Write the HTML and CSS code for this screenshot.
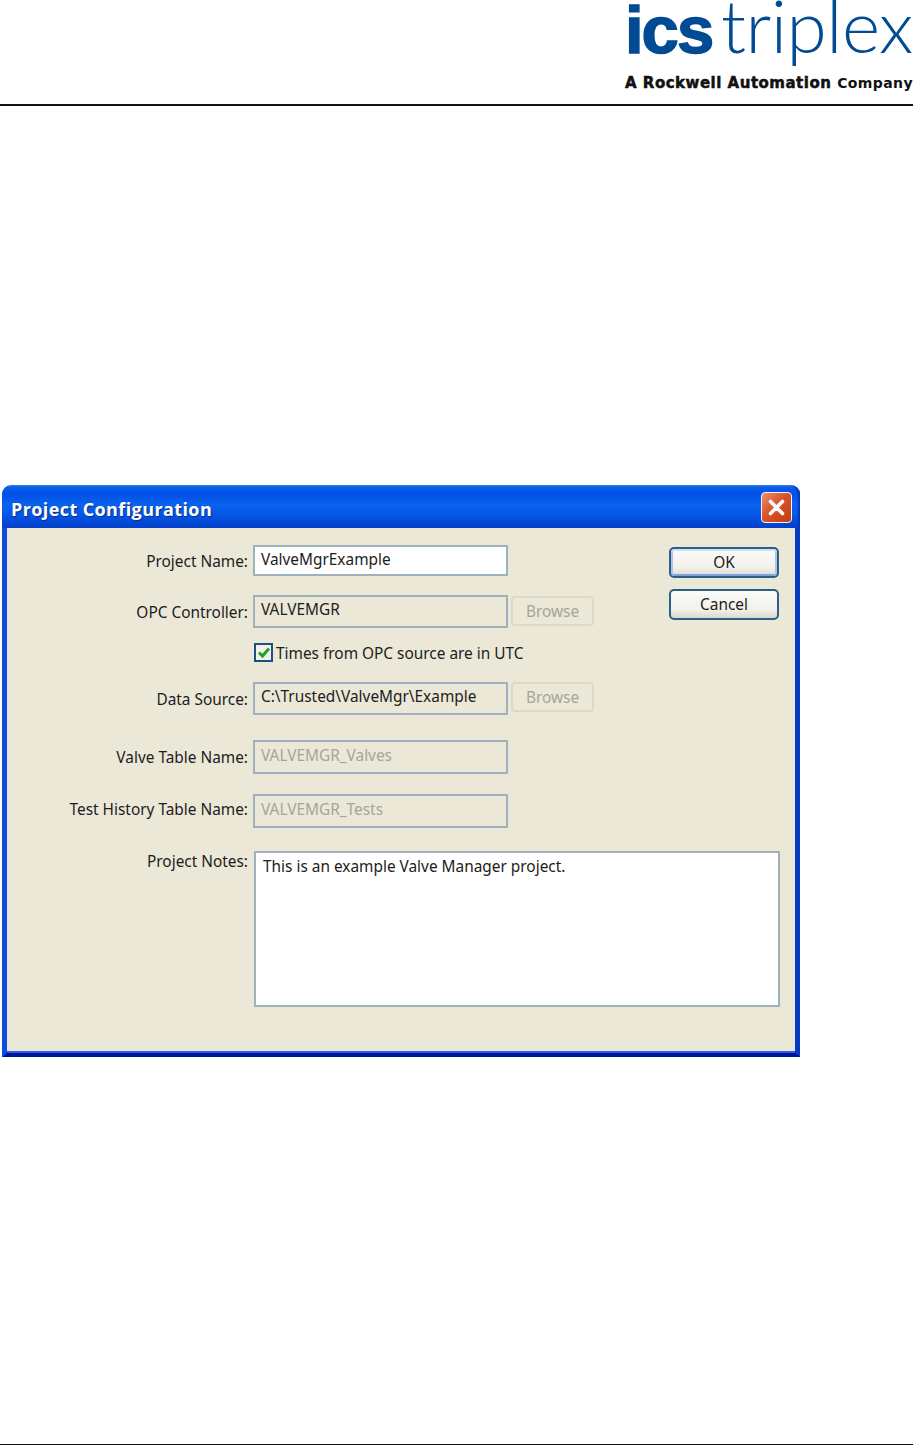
FILE: index.html
```html
<!DOCTYPE html>
<html lang="en">
<head>
<meta charset="utf-8">
<title>Project Configuration</title>
<link rel="stylesheet" href="styles.css">
</head>
<body>
<header class="page-header">
  <div class="logo">
    <div class="logo-main"><span class="logo-ics">ics</span><span class="logo-triplex">triplex</span></div>
    <div class="logo-sub"><span class="logo-rock">A Rockwell Automation</span><span class="logo-co">Company</span></div>
  </div>
</header>
<main class="page-main">
  <section class="dialog">
    <div class="titlebar">
      <span class="title">Project Configuration</span>
      <span class="close">
        <svg width="19" height="19" viewBox="0 0 19 19"><path d="M3.5 3.5 L15.5 15.5 M15.5 3.5 L3.5 15.5" stroke="#fff" stroke-width="3.6" stroke-linecap="round" fill="none"/></svg>
      </span>
    </div>
    <div class="dialog-body">
      <div class="form">
        <div class="row row-name">
          <label class="lbl">Project Name:</label>
          <div class="field white">ValveMgrExample</div>
        </div>
        <div class="row row-opc">
          <label class="lbl">OPC Controller:</label>
          <div class="field">VALVEMGR</div>
          <div class="browse">Browse</div>
        </div>
        <div class="row row-check">
          <span class="box"><svg width="14" height="13" viewBox="0 0 14 13"><path d="M2 6.5 L5.5 10 L12 2.5" stroke="#21a121" stroke-width="3" fill="none"/></svg></span>
          <span class="check-text">Times from OPC source are in UTC</span>
        </div>
        <div class="row row-src">
          <label class="lbl">Data Source:</label>
          <div class="field">C:\Trusted\ValveMgr\Example</div>
          <div class="browse">Browse</div>
        </div>
        <div class="row row-valve">
          <label class="lbl lbl-valve">Valve Table Name:</label>
          <div class="field disabled">VALVEMGR_Valves</div>
        </div>
        <div class="row row-test">
          <label class="lbl lbl-test">Test History Table Name:</label>
          <div class="field disabled">VALVEMGR_Tests</div>
        </div>
        <div class="row row-notes">
          <label class="lbl lbl-top">Project Notes:</label>
          <div class="notes">This is an example Valve Manager project.</div>
        </div>
      </div>
      <div class="actions">
        <div class="btn default">OK</div>
        <div class="btn">Cancel</div>
      </div>
    </div>
  </section>
</main>
<footer class="page-footer"></footer>
</body>
</html>
```
FILE: styles.css
```css
* { box-sizing: border-box; }
html, body { margin: 0; padding: 0; height: 100%; }
body {
  display: flex;
  flex-direction: column;
  height: 1445px;
  background: #fff;
  font-family: "Noto Sans", "DejaVu Sans", sans-serif;
  font-size: 15.4px;
  color: #1c1c1c;
  overflow: hidden;
}
.page-header {
  height: 106px;
  border-bottom: 2px solid #111;
  display: flex;
  justify-content: flex-end;
}
.logo { width: 288px; }
.logo-main {
  display: flex;
  align-items: baseline;
  height: 73px;
  color: #004b93;
  line-height: 50px;
  white-space: nowrap;
}
.logo-ics {
  font-family: "Liberation Sans", sans-serif;
  font-weight: 700;
  font-size: 67px;
  width: 96px;
  letter-spacing: -2px;
  -webkit-text-stroke: 1.5px #004b93;
}
.logo-triplex {
  font-family: "Lato", sans-serif;
  font-weight: 300;
  font-size: 73px;
  letter-spacing: -0.5px;
}
.logo-sub {
  display: flex;
  justify-content: space-between;
  align-items: baseline;
  height: 20px;
  line-height: 20px;
  color: #111;
  white-space: nowrap;
}
.logo-rock {
  font-family: "DejaVu Sans", sans-serif;
  font-weight: 700;
  font-size: 15px;
  letter-spacing: .5px;
  -webkit-text-stroke: .5px #111;
}
.logo-co {
  font-family: "DejaVu Sans", sans-serif;
  font-weight: 700;
  font-size: 14px;
  letter-spacing: .4px;
}
.page-main { flex: 1; padding: 379px 0 0 2px; }
.page-footer { height: 1px; background: #111; }

.dialog { width: 798px; height: 572px; display: flex; flex-direction: column; }
.titlebar {
  height: 43px;
  border-radius: 9px 9px 0 0;
  background: linear-gradient(#2f7cf2 0, #0a5ce8 6%, #0050e6 20%, #0a62ee 45%, #0656e6 70%, #0346d2 90%, #0540c8 100%);
  box-shadow: inset -3px 0 2px -1px #0338b8;
  display: flex;
  align-items: center;
  justify-content: space-between;
  padding: 2px 8px 0 9px;
}
.title {
  color: #fff;
  font-family: "Open Sans", sans-serif;
  font-weight: 700;
  font-size: 18px;
  letter-spacing: .4px;
  margin-top: 2px;
  text-shadow: 1px 1px 1px #0a2f8f;
}
.close {
  width: 31px;
  height: 31px;
  border: 1px solid #f2f2f2;
  border-radius: 4px;
  background: linear-gradient(135deg, #e8906e, #d8532c 45%, #c23a14);
  display: flex;
  align-items: center;
  justify-content: center;
}
.dialog-body {
  flex: 1;
  display: flex;
  background: #ebe8d8;
  border-style: solid;
  border-color: #0a4fe0;
  border-width: 0 5px 4px 5px;
  border-right-color: #0538c4;
  border-bottom-color: #00109a;
  box-shadow: inset 0 -2px 0 #1f63e8;
  padding-top: 17px;
}
.form { display: flex; flex-direction: column; width: 657px; }
.row { display: flex; align-items: center; }
.row-name { height: 31px; }
.row-opc { height: 33px; margin-top: 19px; }
.row-check { height: 19px; margin-top: 15px; padding-left: 247px; }
.row-src { height: 33px; margin-top: 20px; }
.row-valve { height: 34px; margin-top: 25px; }
.row-test { height: 34px; margin-top: 20px; }
.row-notes { height: 156px; margin-top: 23px; align-items: flex-start; }
.lbl { flex: 0 0 241px; text-align: right; white-space: nowrap; margin-top: 2px; }
.lbl-valve { margin-top: 0; }
.lbl-test { margin-top: -4px; }
.lbl-top { margin-top: 0; }
.field {
  flex: 0 0 255px;
  height: 100%;
  margin-left: 5px;
  border: 2px solid #9fb1bd;
  padding: 0 6px 4px;
  display: flex;
  align-items: center;
  white-space: nowrap;
  overflow: hidden;
}
.field.white { background: #fff; padding-bottom: 2px; }
.field.disabled { color: #a6a598; }
.browse {
  flex: 0 0 83px;
  height: 30px;
  margin-left: 3px;
  align-self: flex-start;
  border: 2px solid #dcd9c9;
  border-radius: 4px;
  color: #a6a598;
  text-align: center;
  line-height: 27px;
}
.row-opc .browse { margin-top: 1px; }
.box {
  width: 19px;
  height: 19px;
  border: 2px solid #1c5180;
  background: #f2f1ea;
  display: flex;
  align-items: center;
  justify-content: center;
}
.check-text { margin-left: 3px; margin-top: 1px; white-space: nowrap; }
.notes {
  flex: 0 0 526px;
  height: 100%;
  margin-left: 6px;
  background: #fff;
  border: 2px solid #9fb1bd;
  padding: 3px 7px;
}
.actions { display: flex; flex-direction: column; gap: 11px; padding: 2px 0 0 5px; }
.btn {
  width: 110px;
  height: 31px;
  border: 2px solid #2b5f86;
  border-radius: 5px;
  background: linear-gradient(#fbfbf8, #f2f1ea 70%, #dcd8ca);
  text-align: center;
  line-height: 27px;
}
.btn.default { box-shadow: inset 0 2px 0 #cfe0f8, inset 2px 0 0 #a9c4ea, inset -2px 0 0 #a9c4ea, inset 0 -2px 0 #7fa0e0; }
```
